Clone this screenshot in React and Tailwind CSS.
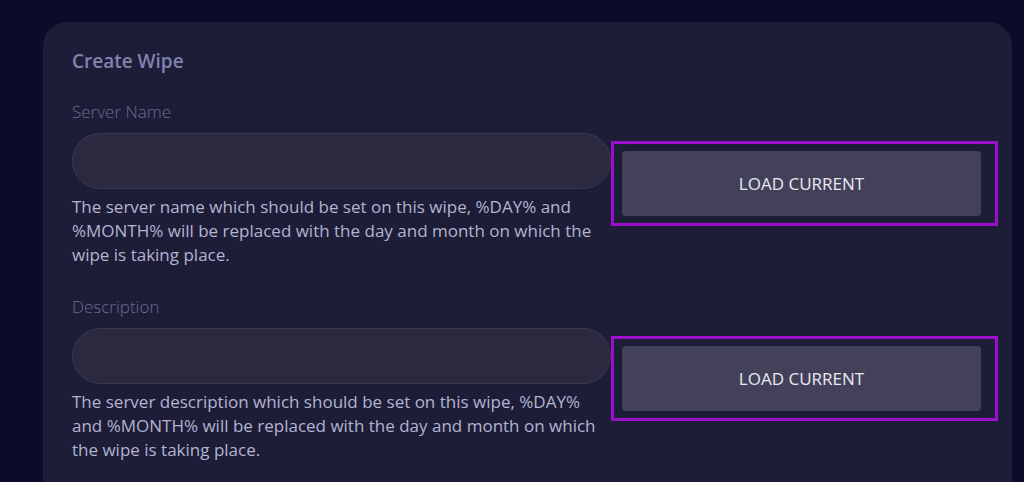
import React from "react";

function Section({ label, help, className = "" }) {
  return (
    <div className={"flex items-start " + className}>
      <div className="w-[539px] flex flex-col">
        <label className="text-[17px] leading-[24px] font-light text-[#6b6b90]">{label}</label>
        <input
          type="text"
          className="mt-[9px] h-[56px] w-full rounded-full bg-[#2a293f] border border-[#3a394f] px-6 text-[17px] text-[#d0d0e0] outline-none"
        />
        <p className="mt-[6px] text-[17px] leading-[24px] text-[#b2b4d0] pr-[8px]">{help}</p>
      </div>
      <div className="mt-[41px] w-[387px] h-[85px] border-[3px] border-[#9a0fcc] pt-[7px] pl-[8px]">
        <button className="w-[359px] h-[65px] rounded-[4px] bg-[#43415a] text-[17px] text-[#e9e9f2] flex items-center justify-center">
          LOAD CURRENT
        </button>
      </div>
    </div>
  );
}

export default function App() {
  return (
    <div
      className="h-[482px] w-[1024px] overflow-hidden bg-[#0c0b2a] pt-[22px] pl-[43px]"
      style={{ fontFamily: '"Open Sans", "Noto Sans", sans-serif' }}
    >
      <div className="w-[969px] h-[600px] rounded-[24px] bg-[#1e1d38] pt-[25px] pl-[29px]">
        <h2 className="text-[19px] leading-[28px] font-semibold text-[#8083ad]">Create Wipe</h2>
        <div className="mt-[25px] flex flex-col">
          <Section
            label="Server Name"
            help="The server name which should be set on this wipe, %DAY% and %MONTH% will be replaced with the day and month on which the wipe is taking place."
          />
          <Section
            className="mt-[28px]"
            label="Description"
            help="The server description which should be set on this wipe, %DAY% and %MONTH% will be replaced with the day and month on which the wipe is taking place."
          />
        </div>
      </div>
    </div>
  );
}
